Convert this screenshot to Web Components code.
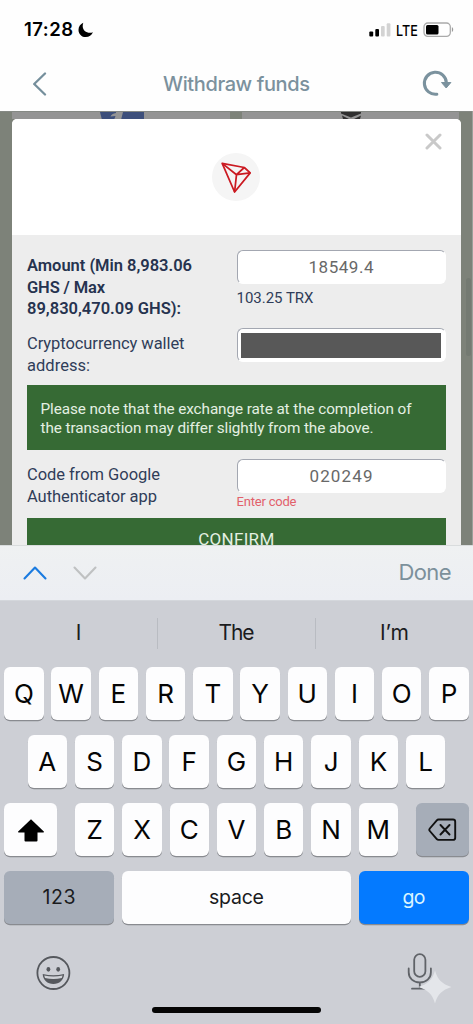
<!DOCTYPE html>
<html lang="en">
<head>
<meta charset="utf-8">
<title>Withdraw funds</title>
<style>
html,body{margin:0;padding:0}
body{width:473px;height:1024px;overflow:hidden;background:#fff;font-family:Inter,"Liberation Sans",sans-serif}
</style>
</head>
<body>
<phone-screen></phone-screen>
<script>
const define = (name, html, setup) => customElements.define(name, class extends HTMLElement {
  connectedCallback() {
    if (this.shadowRoot) return;
    this.attachShadow({mode: 'open'}).innerHTML = html;
    if (setup) setup.call(this, this.shadowRoot);
  }
});

/* A single line of text tracked to an exact width given by w */
define('fit-text', `<style>:host{display:inline-block;white-space:pre;vertical-align:top}</style><slot></slot>`, function () {
  const w = +this.getAttribute('w'), n = this.textContent.length;
  const natural = this.getBoundingClientRect().width;
  if (w && natural) {
    const s = (w - natural) / Math.max(1, n - 1);
    this.style.letterSpacing = s.toFixed(3) + 'px';
    this.style.marginRight = (-s).toFixed(3) + 'px';
  }
});

define('status-bar', `<style>
:host{display:flex;height:56px;box-sizing:border-box;padding:19px 19px 0 24px;justify-content:space-between;color:#000}
.l,.r{display:flex;align-items:center;height:21px}
.time{font-size:18.5px;font-weight:600;line-height:21px}
.moon{margin-left:5px}
.lte{font-size:15px;font-weight:500;width:22px;line-height:21px;margin:1px 5px 0 5px}
.lte span{display:inline-block;transform:scaleX(.84);transform-origin:0 50%}
svg{display:block}
</style>
<div class="l"><span class="time"><fit-text w="49">17:28</fit-text></span>
<svg class="moon" width="16" height="16" viewBox="0 0 16 16"><path d="M5.300.8C2.400 2 .5 4.700.5 7.900c0 4 3.200 7.200 7.200 7.200 3.300 0 6.100-1.900 7.200-4.900-1 .4-2 .6-3 .6-4 0-7.200-3-7.200-6.600 0-1.200.2-2.400.6-3.400z" fill="#000"/></svg></div>
<div class="r"><svg width="22" height="15" viewBox="0 0 22 15"><rect x=".3" y="9.600" width="3.900" height="4.900" rx="1"/><rect x="6.300" y="7" width="3.700" height="7.500" rx="1"/><rect x="12" y="4" width="3.700" height="10.500" rx="1" fill="#d3d3d3"/><rect x="17.700" y="1.200" width="3.700" height="13.300" rx="1" fill="#d3d3d3"/></svg>
<div class="lte"><span>LTE</span></div>
<svg width="31" height="15" viewBox="0 0 31 15"><rect x="1" y="1" width="26.300" height="13.300" rx="3.800" fill="#fff" stroke="#aaa" stroke-width="1.300"/><rect x="3" y="3" width="12.500" height="9.400" rx="1.500"/><path d="M28.900 5.300v4.600c.9-.4 1.300-1.200 1.300-2.300s-.4-1.900-1.300-2.300z" fill="#999"/></svg></div>`);

define('nav-bar', `<style>
:host{display:grid;grid-template-columns:56px 1fr 56px;height:55px;align-items:center;color:#7b919d}
svg{display:block}.back{margin-left:32px}.re{margin-left:5px}
.t{text-align:center;font-size:20px;font-weight:450;line-height:24px}
</style>
<svg class="back" width="16" height="24" viewBox="0 0 16 24"><path d="M13 1.500 2.200 12 13 22.500" fill="none" stroke="#758f9c" stroke-width="2.300" stroke-linecap="round" stroke-linejoin="round"/></svg>
<div class="t"><fit-text w="147">Withdraw funds</fit-text></div>
<svg class="re" width="30" height="28" viewBox="0 0 30 28"><path d="M14.800 24.200A11 11 0 1 1 24.400 13" fill="none" stroke="#7b929e" stroke-width="3.100" stroke-linecap="round"/><path d="M19.500 12.500h9.400l-4.700 5.500z" fill="#7b929e" stroke="#7b929e" stroke-linejoin="round"/></svg>`);

define('page-backdrop', `<style>
:host{display:block;height:434px;position:relative;overflow:hidden;background:#7d8279}
.cards{display:flex;height:8px;border-top:1px solid #858984;box-sizing:border-box;padding-left:12px;gap:12px}
.c{width:218px;background:#949494;height:7px;overflow:hidden}.c svg{display:block}
.edge{position:absolute;right:2px;top:167px;width:5px;height:78px;border-radius:3px;background:#747a72}
.line{position:absolute;right:0;top:0;bottom:0;width:1px;background:#9ca09b}
::slotted(*){position:relative}
</style>
<div class="cards"><div class="c"><svg width="218" height="8"><path d="M88 0h44v8H90z" fill="#3d4f7b"/><path d="M104 0h7q-1 4-2 8h-7l1.500-4-5 .5q1-3 5.500-3.500z" fill="#949494"/></svg></div>
<div class="c" style="width:217px"><svg width="217" height="8"><path d="M99 0h20v1.500l-10 4-10-4zM100 3.500l7 3.500h-6zM119 3.500l-7 3.500h6z" fill="#303030"/></svg></div></div>
<i class="line"></i><i class="edge"></i><slot></slot>`);

define('coin-badge', `<style>:host{display:block;width:48px;height:48px;border-radius:50%;background:#f5f5f5}svg{display:block}</style>
<svg width="48" height="48" viewBox="0 0 48 48"><g fill="none" stroke="#cb1a22" stroke-width="1.750" stroke-linejoin="round"><path d="M10.200 10.400 32.300 14.500 38.200 19.900 22.600 39z"/><path d="M10.200 10.400 24.500 21.700 38.200 19.900M24.500 21.700 32.300 14.500M24.500 21.700 22.600 39"/></g></svg>`);

define('text-box', `<style>
:host{display:block;box-sizing:border-box;width:209px;height:34px;border-radius:6px;background:#fff;border:1.5px solid #fff;border-top-color:#a3a7b1;border-left-color:#a3a7b1;padding:3px;color:#686868;font:450 17px/27px Roboto,sans-serif;text-align:center}
::slotted(.mask){display:block;height:25px;width:200px;margin:.5px 0 0 .5px;background:#585858}
</style><slot></slot>`);

define('withdraw-dialog', `<style>
:host{display:block;width:448.500px;height:426px;margin-left:12px;border-radius:5px 5px 0 0;overflow:hidden;background:#ededed;font-family:Roboto,sans-serif;color:#303d59}
header{height:115.500px;background:#fff;display:grid;grid-template-columns:1fr 48px 1fr}
coin-badge{margin-top:34px}
.x{justify-self:end;margin:14px 19px 0 0}
.body{padding:15.500px 15px 0 15px}
.row{display:grid;grid-template-columns:1fr 209px}
.row1{height:78px}.row2{height:57px}.row3{height:59px;padding-top:9px}
.lab{font-size:16.500px;line-height:21.500px;padding-top:5px}
.lab fit-text{display:block;width:max-content}
b{font-weight:600;color:#26334f}
.trx{font-size:15px;line-height:18px;margin-top:5px}
.err{font-size:13px;line-height:16px;color:#e2606b;margin-top:1px}
.note{height:65px;box-sizing:border-box;padding:15px 13.500px;background:#366a34;color:#e4f0e2;font-size:15.300px;line-height:19.200px}
.note fit-text{display:block;width:max-content}
.go{height:50px;background:#366a34;color:#e4f0e2;font-size:17px;line-height:42px;text-align:center}
</style>
<header><span></span><coin-badge></coin-badge><svg class="x" width="17" height="17" viewBox="0 0 17 17"><path d="m2 2 13 13M15 2 2 15" stroke="#c9c9c9" stroke-width="3" stroke-linecap="round"/></svg></header>
<div class="body">
<div class="row row1"><div class="lab"><b><fit-text w="165">Amount (Min 8,983.06</fit-text><fit-text w="78">GHS / Max</fit-text><fit-text w="154">89,830,470.09 GHS):</fit-text></b></div>
<div><text-box><fit-text w="65">18549.4</fit-text></text-box><div class="trx"><fit-text w="77">103.25 TRX</fit-text></div></div></div>
<div class="row row2"><div class="lab"><fit-text w="157.5">Cryptocurrency wallet</fit-text><fit-text w="63">address:</fit-text></div><text-box><span class="mask"></span></text-box></div>
<div class="note"><fit-text w="371">Please note that the exchange rate at the completion of</fit-text><fit-text w="333">the transaction may differ slightly from the above.</fit-text></div>
<div class="row row3"><div class="lab"><fit-text w="133">Code from Google</fit-text><fit-text w="130">Authenticator app</fit-text></div><div><text-box><fit-text w="63">020249</fit-text></text-box><div class="err"><fit-text w="60">Enter code</fit-text></div></div></div>
<div class="go"><fit-text w="76">CONFIRM</fit-text></div>
</div>`);

define('input-toolbar', `<style>
:host{display:flex;height:55px;box-sizing:border-box;background:linear-gradient(#eff1f2,#eceef3);border-top:1px solid #d9dcdd;align-items:center;padding:0 21.500px 0 23px}
svg{display:block}.dn{margin-left:26px}
.d{margin:-2px 0 0 auto;color:#7c909b;font-size:22px;line-height:26px}
</style>
<svg width="24" height="14" viewBox="0 0 24 14"><path d="M1.500 12.500 12 1.500l10.500 11" fill="none" stroke="#1b7be0" stroke-width="2.100" stroke-linecap="round" stroke-linejoin="round"/></svg>
<svg class="dn" width="24" height="14" viewBox="0 0 24 14"><path d="M1.500 1.500 12 12.500l10.500-11" fill="none" stroke="#bfc1c2" stroke-width="2.100" stroke-linecap="round" stroke-linejoin="round"/></svg>
<div class="d"><fit-text w="53">Done</fit-text></div>`);

define('key-cap', `<style>
:host{display:flex;align-items:center;justify-content:center;box-sizing:border-box;width:39.400px;height:53px;border-radius:6px;background:#fdfdfe;box-shadow:0 1.200px 0 #898b90;font-size:26px;line-height:30px;padding-top:1px;color:#050505}
:host([wide]){width:53px}
:host([dark]){background:#a6adb8}
:host([word]){font-size:19.500px;color:#1a1b1d;padding-bottom:2px}
:host([blue]){background:#047aff;color:#d9f4ff}
</style><slot></slot>`);

define('soft-keyboard', `<style>
:host{display:block;height:424px;background:#cdcfd5;box-sizing:border-box}
.sug{display:flex;height:67px;align-items:center;border-top:1px solid #d4d7dc;box-sizing:border-box;font-size:21px;color:#1b1c1e}
.sug div{flex:1;text-align:center;height:31px;line-height:30px;border-left:1px solid #b9bcc2;box-sizing:border-box;margin-bottom:2px}
.sug div:first-child{border-left:0}
.row{display:flex;justify-content:space-between;height:68px;padding:0 4.200px}
.r2{padding:0 27.600px}
.mid{display:flex;gap:7.850px}
.n{width:109.700px}.s{width:229.700px}
.foot{display:flex;justify-content:space-between;padding:16px 40px 0 35px;height:66px;box-sizing:border-box}
svg{display:block}
.mic{position:relative;width:26px;height:40px;margin-top:-2px}
.star{position:absolute;left:11px;top:17px}
.bar{width:169px;height:6px;border-radius:3px;background:#050505;margin:2px auto 0}
</style>
<div class="sug"><div>I</div><div><fit-text w="36">The</fit-text></div><div><fit-text w="29">I’m</fit-text></div></div>
<div class="row" id="a"></div><div class="row r2" id="b"></div>
<div class="row"><key-cap wide><svg width="28" height="25" viewBox="0 0 28 25"><path d="M14 1.300 26.800 13.500c.4.400.2.900-.4.900H20.500v8.100q0 1-1 1h-11q-1 0-1-1v-8.100H1.600c-.6 0-.8-.5-.4-.9z" fill="#000"/></svg></key-cap><div class="mid" id="c"></div>
<key-cap wide dark><svg width="29" height="24" viewBox="0 0 29 24"><path d="M10.500 1.500H25q2.200 0 2.200 2.200v16q0 2.200-2.200 2.200H10.500q-1 0-1.700-.8L1.800 13q-1-1.200 0-2.500l7-8.200q.7-.8 1.700-.8zM12.500 7l9 9.500M21.500 7l-9 9.500" fill="none" stroke="#111" stroke-width="1.900" stroke-linecap="round" stroke-linejoin="round"/></svg></key-cap></div>
<div class="row"><key-cap class="n" dark word><fit-text w="33">123</fit-text></key-cap><key-cap class="s" word><fit-text w="55">space</fit-text></key-cap><key-cap class="n" word blue><fit-text w="23">go</fit-text></key-cap></div>
<div class="foot">
<svg width="36" height="36" viewBox="0 0 36 36"><circle cx="18.400" cy="18" r="16" fill="none" stroke="#55585d" stroke-width="1.800"/><ellipse cx="13.400" cy="14.300" rx="1.900" ry="2.400" fill="#55585d"/><ellipse cx="23.200" cy="14.300" rx="1.900" ry="2.400" fill="#55585d"/><path d="M7.700 19q10.700 2.500 21.400 0c-.2 6-4.700 10-10.700 10S7.900 25 7.700 19z" fill="#55585d"/><path d="M9.200 20.600q9.200 1.800 18.400 0l-.8 2.500q-8.400 2-16.800 0z" fill="#d0d2d7"/></svg>
<div class="mic"><svg width="26" height="40" viewBox="0 0 26 40"><g fill="none" stroke="#606368" stroke-width="1.800" stroke-linecap="round"><rect x="7.200" y="1.200" width="11.200" height="22.600" rx="5.600"/><path d="M1.700 15.500v3.700c0 6 4.700 10.200 11.100 10.200s11.100-4.200 11.100-10.200v-3.700M12.800 29.400v6.100M5 35.700h15.600"/></g></svg>
<svg class="star" width="34" height="34" viewBox="0 0 34 34"><path d="M17 .5c2.500 9 7 13.500 16.500 16.500C24 20 19.500 24.500 17 33.500 14.500 24.500 10 20 .5 17 10 14 14.500 9.500 17 .5z" fill="#e4e6ea"/></svg></div></div>
<div class="bar"></div>`, root => {
  const rows = {a: 'QWERTYUIOP', b: 'ASDFGHJKL', c: 'ZXCVBNM'};
  for (const id in rows)
    root.getElementById(id).innerHTML = [...rows[id]].map(k => `<key-cap>${k}</key-cap>`).join('');
});

define('phone-screen', `<style>:host{display:flex;flex-direction:column;width:473px;height:1024px;overflow:hidden;background:#fefefe}</style>
<status-bar></status-bar><nav-bar></nav-bar><page-backdrop><withdraw-dialog></withdraw-dialog></page-backdrop><input-toolbar></input-toolbar><soft-keyboard></soft-keyboard>`);
</script>
</body>
</html>
